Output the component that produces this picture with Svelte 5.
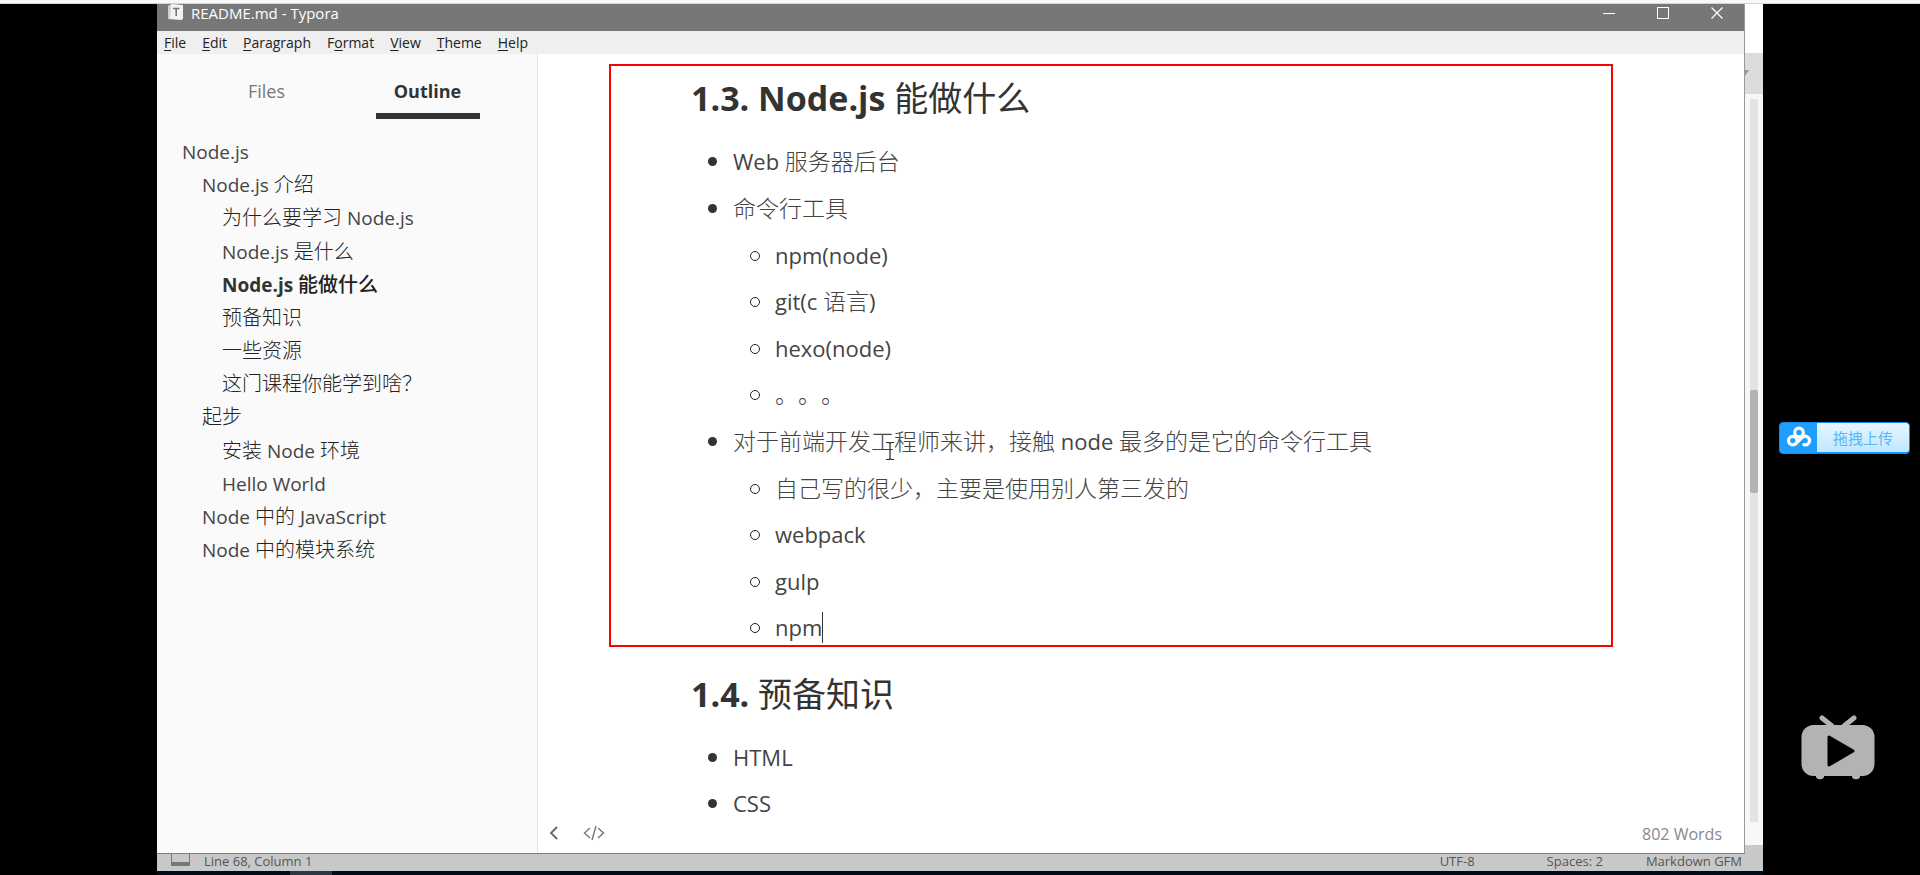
<script>
  const menus = [
    ['', 'F', 'ile'],
    ['', 'E', 'dit'],
    ['', 'P', 'aragraph'],
    ['F', 'o', 'rmat'],
    ['', 'V', 'iew'],
    ['', 'T', 'heme'],
    ['', 'H', 'elp'],
  ];

  const outline = [
    { level: 1, text: 'Node.js' },
    { level: 2, text: 'Node.js 介绍' },
    { level: 3, text: '为什么要学习 Node.js' },
    { level: 3, text: 'Node.js 是什么' },
    { level: 3, text: 'Node.js 能做什么', active: true },
    { level: 3, text: '预备知识' },
    { level: 3, text: '一些资源' },
    { level: 3, text: '这门课程你能学到啥？' },
    { level: 2, text: '起步' },
    { level: 3, text: '安装 Node 环境' },
    { level: 3, text: 'Hello World' },
    { level: 2, text: 'Node 中的 JavaScript' },
    { level: 2, text: 'Node 中的模块系统' },
  ];

  const sections = [
    {
      title: '1.3. Node.js 能做什么',
      framed: true,
      items: [
        { text: 'Web 服务器后台' },
        { text: '命令行工具', children: ['npm(node)', 'git(c 语言)', 'hexo(node)', '。。。'] },
        {
          text: '对于前端开发工程师来讲，接触 node 最多的是它的命令行工具',
          children: ['自己写的很少，主要是使用别人第三发的', 'webpack', 'gulp', 'npm'],
        },
      ],
    },
    { title: '1.4. 预备知识', framed: false, items: [{ text: 'HTML' }, { text: 'CSS' }] },
  ];

  // Split a string into Latin and Chinese runs so each can be styled on its own.
  function runs(text) {
    return text
      .split(/([\u3000-\u9fff\uff00-\uffef]+)/)
      .filter(Boolean)
      .map((t) => ({ t, han: /[\u3000-\u9fff\uff00-\uffef]/.test(t) }));
  }
</script>

{#snippet mixed(text)}{#each runs(text) as r}{#if r.han}<span class="han">{r.t}</span>{:else}{r.t}{/if}{/each}{/snippet}

<div class="page">
  <div class="strip"></div>
  <div class="stage">
    <div class="desktop">
      <div class="front">
        <div class="window">
          <header class="titlebar">
            <svg class="logo" width="17" height="17" viewBox="0 0 17 17" aria-hidden="true">
              <path d="M1 2 L5 0 L16 1 L16 15 L14 16 L1 15 Z" fill="#f2f2f2" />
              <path d="M1 2 L4 2 L3 15 L1 15 Z" fill="#cfcfcf" />
              <path d="M6 4.5 H12.5 M9.2 4.5 V12" stroke="#777" stroke-width="1.6" fill="none" />
            </svg>
            <span class="title">README.md - Typora</span>
            <div class="controls">
              <button aria-label="Minimize"><svg width="14" height="14" viewBox="0 0 14 14"><path d="M1 7.5 H13" stroke="#fff" fill="none" /></svg></button>
              <button aria-label="Maximize"><svg width="14" height="14" viewBox="0 0 14 14"><rect x="1.5" y="1.5" width="11" height="11" stroke="#fff" fill="none" /></svg></button>
              <button aria-label="Close"><svg width="14" height="14" viewBox="0 0 14 14"><path d="M1.5 1.5 L12.5 12.5 M12.5 1.5 L1.5 12.5" stroke="#fff" stroke-width="1.2" fill="none" /></svg></button>
            </div>
          </header>
          <nav class="menubar">
            {#each menus as [a, key, b]}
              <button>{a}<u>{key}</u>{b}</button>
            {/each}
          </nav>
          <div class="content">
            <aside class="sidebar">
              <div class="tabs">
                <button class="tab">Files</button>
                <button class="tab on">Outline</button>
              </div>
              <ul class="outline">
                {#each outline as o}
                  <li class="l{o.level}" class:active={o.active}><a href="#top">{@render mixed(o.text)}</a></li>
                {/each}
              </ul>
            </aside>
            <main class="editor">
              <div class="doc">
                {#each sections as s}
                  <section class:framed={s.framed}>
                    <h2>{@render mixed(s.title)}</h2>
                    <ul class="list">
                      {#each s.items as item}
                        <li>
                          <div class="row"><i class="disc"></i><span>{@render mixed(item.text)}</span></div>
                          {#if item.children}
                            <ul class="sub">
                              {#each item.children as c}
                                <li class="row"><i class="ring"></i><span>{@render mixed(c)}</span>{#if c === 'npm'}<b class="caret"></b>{/if}</li>
                              {/each}
                            </ul>
                          {/if}
                        </li>
                      {/each}
                    </ul>
                  </section>
                {/each}
                <svg class="ibeam" width="10" height="20" viewBox="0 0 10 20" aria-hidden="true">
                  <path d="M1 1.5 H4 L5 2.5 L6 1.5 H9 M5 2.5 V17.5 M1 18.5 H4 L5 17.5 L6 18.5 H9" stroke="#222" stroke-width="1.2" fill="none" />
                </svg>
              </div>
              <footer class="tools">
                <button aria-label="Hide sidebar"><svg width="10" height="16" viewBox="0 0 10 16"><path d="M8 2 L2 8 L8 14" stroke="#666" stroke-width="1.8" fill="none" /></svg></button>
                <button aria-label="Source code"><svg width="22" height="16" viewBox="0 0 22 16"><path d="M7 3 L1.5 8 L7 13 M15 3 L20.5 8 L15 13 M13 1 L9 15" stroke="#777" stroke-width="1.4" fill="none" /></svg></button>
                <span class="words">802 Words</span>
              </footer>
            </main>
          </div>
        </div>
        <div class="edge">
          <div class="edge-toolbar"><svg width="4" height="6" viewBox="0 0 4 6"><path d="M0 0 H4 L0 6 Z" fill="#999" /></svg></div>
          <div class="edge-body"><div class="track"><div class="thumb"></div></div></div>
          <div class="edge-foot"></div>
        </div>
      </div>
      <div class="status">
        <i class="panel"></i>
        <span>Line 68, Column 1</span>
        <span class="enc">UTF-8</span>
        <span class="spaces">Spaces: 2</span>
        <span>Markdown GFM</span>
      </div>
      <div class="taskbar"><i></i></div>
    </div>
  </div>

  <button class="upload">
    <span class="cloud">
      <svg width="26" height="22" viewBox="0 0 26 22" aria-hidden="true">
        <g fill="none" stroke="#fff" stroke-width="3.2" stroke-linecap="round">
          <circle cx="13" cy="6.5" r="4.3" />
          <circle cx="6.8" cy="14.6" r="4.3" />
          <path d="M9.8 17.6 L16 11.6 A4.3 4.3 0 1 1 18 18.7" />
        </g>
      </svg>
    </span>
    <span class="label">拖拽上传</span>
  </button>

  <svg class="tv" width="74" height="66" viewBox="0 0 74 66" aria-hidden="true">
    <path d="M21 3 L31 11 M53 3 L43 11" stroke="#b3b3b3" stroke-width="5" stroke-linecap="round" />
    <rect x="0.5" y="10" width="73" height="51" rx="12" fill="#b3b3b3" />
    <path d="M15 60 a4 4 0 0 0 8 0 Z M51 60 a4 4 0 0 0 8 0 Z" fill="#b3b3b3" stroke="#b3b3b3" />
    <path d="M28 22 L52 36 L28 50 Z" fill="#000" stroke="#000" stroke-width="3" stroke-linejoin="round" />
  </svg>
</div>

<style>
  :global(body) {
    margin: 0;
    background: #000;
  }
  .page {
    position: relative;
    display: flex;
    flex-direction: column;
    height: 100vh;
    overflow: hidden;
    background: #000;
    font-family: 'Open Sans', 'Noto Sans CJK SC', sans-serif;
    color: #333;
  }
  button {
    border: 0;
    padding: 0;
    margin: 0;
    background: none;
    font: inherit;
    color: inherit;
  }
  svg {
    display: block;
  }
  ul {
    list-style: none;
    margin: 0;
    padding: 0;
  }
  .han {
    line-height: 1;
    text-spacing-trim: space-all;
  }
  .strip {
    flex: none;
    height: 3px;
    background: #f8f8f8;
    border-bottom: 1px solid #d4d4d4;
  }
  .stage {
    flex: 1;
    min-height: 0;
    display: flex;
    padding: 0 157px;
  }
  .desktop {
    flex: 1;
    display: flex;
    flex-direction: column;
    min-width: 0;
  }
  .front {
    flex: 1;
    min-height: 0;
    display: flex;
  }
  .window {
    flex: 1;
    min-width: 0;
    display: flex;
    flex-direction: column;
    background: #fff;
    border-right: 1px solid #999;
    border-bottom: 1px solid #808080;
  }
  .titlebar {
    flex: none;
    height: 27px;
    display: flex;
    align-items: flex-start;
    background: #777;
    color: #fff;
    font-size: 15px;
    line-height: 18px;
    padding-left: 10px;
  }
  .title {
    margin-left: 7px;
  }
  .controls {
    margin-left: auto;
    display: flex;
    gap: 40px;
    padding: 2px 20px 0 0;
  }
  .menubar {
    flex: none;
    height: 23px;
    display: flex;
    align-items: center;
    gap: 16px;
    padding-left: 7px;
    background: #efefef;
    color: #222;
    font-size: 14px;
    line-height: 22px;
  }
  .menubar u {
    text-underline-offset: 2px;
  }
  .content {
    flex: 1;
    min-height: 0;
    display: flex;
  }
  .sidebar {
    flex: none;
    width: 380px;
    background: #fafafa;
    border-right: 1px solid #e4e4e4;
  }
  .tabs {
    display: flex;
    justify-content: center;
    gap: 57px;
    height: 65px;
    margin-bottom: 17px;
  }
  .tab {
    width: 104px;
    box-sizing: border-box;
    border-bottom: 6px solid transparent;
    font-size: 18px;
    line-height: 24px;
    padding-top: 14px;
    color: #777;
  }
  .tab.on {
    font-weight: 700;
    color: #333;
    border-color: #333;
  }
  .outline {
    font-size: 19px;
    line-height: 33px;
  }
  .outline li:nth-child(6n + 4) {
    margin-top: 1px;
  }
  .outline a {
    color: #444;
    text-decoration: none;
  }
  .outline .han {
    font-size: 20px;
    font-weight: 300;
    color: #222;
  }
  .outline .active a {
    font-weight: 700;
    color: #333;
  }
  .outline .active .han {
    font-weight: 500;
  }
  .l1 {
    padding-left: 25px;
  }
  .l2 {
    padding-left: 45px;
  }
  .l3 {
    padding-left: 65px;
  }
  .editor {
    flex: 1;
    min-width: 0;
    display: flex;
    flex-direction: column;
  }
  .doc {
    position: relative;
    flex: 1;
    min-height: 0;
    overflow: hidden;
    padding: 10px 131px 0 71px;
  }
  section {
    padding: 15px 82px 0;
  }
  section.framed {
    border: 2px solid #f00;
    padding: 0 80px 2px;
  }
  h2 {
    margin: 0;
    padding: 9px 0 25px;
    font-size: 34px;
    line-height: 46px;
    font-weight: 700;
  }
  h2 .han {
    font-weight: 400;
  }
  .list {
    padding-left: 17px;
    font-size: 22px;
    color: #444;
  }
  .list .han {
    font-size: 23px;
    font-weight: 300;
  }
  .row {
    display: flex;
    align-items: center;
    height: 31px;
    line-height: 31px;
    white-space: nowrap;
  }
  .list > li + li,
  .sub > li {
    margin-top: 16px;
  }
  .sub > li:nth-child(even),
  section:not(.framed) .list > li + li {
    margin-top: 15px;
  }
  .sub {
    padding-left: 42px;
  }
  .disc,
  .ring {
    flex: none;
    box-sizing: border-box;
    border-radius: 50%;
  }
  .disc {
    width: 9px;
    height: 9px;
    margin-right: 16px;
    background: #333;
  }
  .ring {
    width: 10px;
    height: 10px;
    margin-right: 15px;
    border: 1px solid #222;
  }
  .caret {
    width: 1px;
    height: 31px;
    background: #333;
  }
  .ibeam {
    position: absolute;
    left: 347px;
    top: 387px;
  }
  .tools {
    flex: none;
    height: 33px;
    display: flex;
    align-items: flex-start;
    padding: 0 22px 0 11px;
    font-size: 16px;
    line-height: 28px;
    color: #888;
  }
  .tools button {
    margin: 5px 24px 0 0;
  }
  .words {
    margin-left: auto;
  }
  .edge {
    flex: none;
    width: 18px;
    display: flex;
    flex-direction: column;
    background: #fff;
  }
  .edge-toolbar {
    height: 41px;
    margin-top: 49px;
    padding-top: 17px;
    box-sizing: border-box;
    background: #dcdcdc;
  }
  .edge-body {
    flex: 1;
    padding: 5px 5px 23px;
    background: #f7f7f7;
  }
  .track {
    height: 100%;
    box-sizing: border-box;
    padding-top: 291px;
    background: #e3e3e3;
  }
  .thumb {
    height: 103px;
    border-radius: 2px;
    background: #b2b2b2;
  }
  .edge-foot {
    height: 9px;
    background: #c8c8c8;
  }
  .status {
    flex: none;
    height: 17px;
    display: flex;
    align-items: flex-start;
    padding: 0 21px 0 14px;
    background: #c8c8c8;
    font-size: 13px;
    line-height: 15px;
    color: #555;
  }
  .panel {
    width: 19px;
    height: 12px;
    box-sizing: border-box;
    margin-right: 14px;
    border: 1px solid #777;
    border-top: 0;
    border-bottom-width: 4px;
  }
  .enc {
    margin-left: auto;
  }
  .spaces {
    margin: 0 43px 0 72px;
  }
  .taskbar {
    flex: none;
    height: 4px;
    padding-left: 133px;
    background: #000d18;
  }
  .taskbar i {
    display: block;
    width: 42px;
    height: 4px;
    background: #2c3944;
  }
  .upload {
    position: absolute;
    right: 10px;
    top: 422px;
    width: 131px;
    height: 32px;
    box-sizing: border-box;
    display: flex;
    overflow: hidden;
    border: 1px solid #1a86e8;
    border-radius: 4px;
    background: #1e9fff;
  }
  .cloud {
    display: flex;
    align-items: center;
    justify-content: center;
    width: 37px;
    height: 28px;
  }
  .label {
    flex: 1;
    height: 29px;
    border-radius: 0 3px 3px 0;
    background: linear-gradient(#e6f6ff, #bfe8ff);
    font-size: 15px;
    line-height: 31px;
    color: #5cb5f5;
  }
  .tv {
    position: absolute;
    right: 45px;
    top: 715px;
  }
</style>
